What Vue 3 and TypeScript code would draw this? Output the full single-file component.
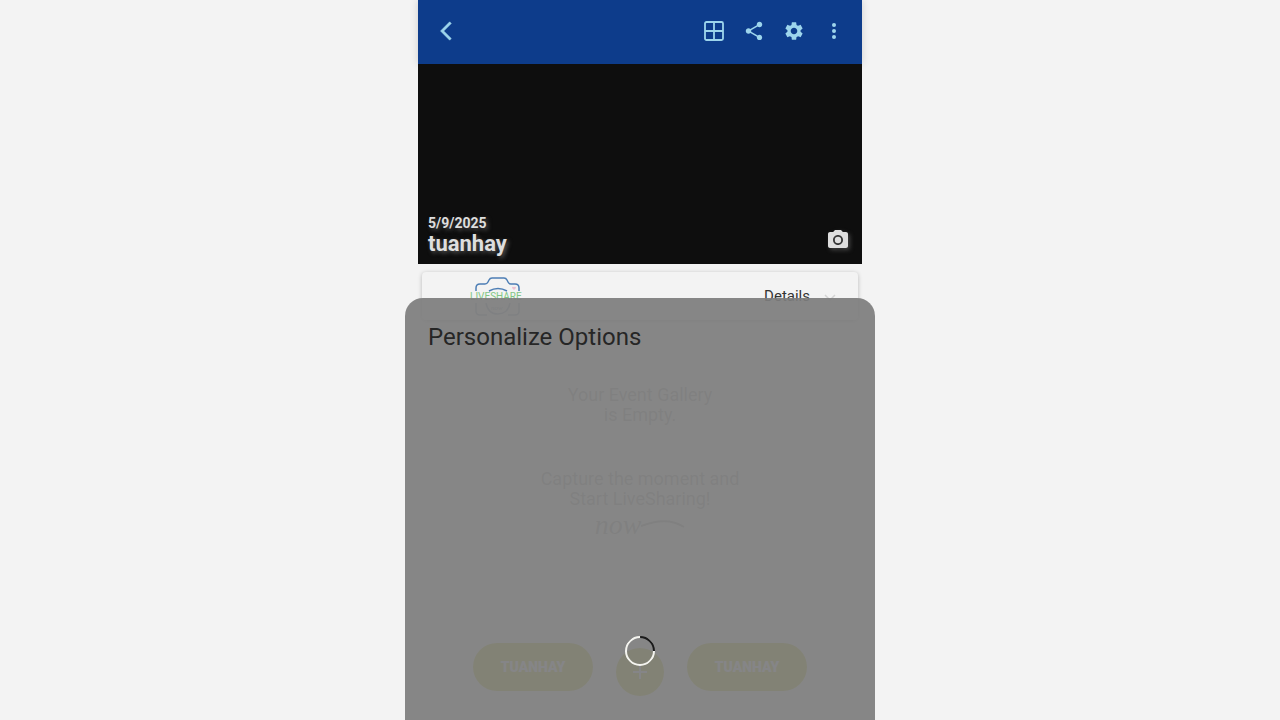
<script setup lang="ts">
const eventName = 'tuanhay'
const eventDate = '5/9/2025'
const gear =
  'M19.14 12.94c.04-.3.06-.61.06-.94 0-.32-.02-.64-.07-.94l2.03-1.58c.18-.14.23-.41.12-.61l-1.92-3.32c-.12-.22-.37-.29-.59-.22l-2.39.96c-.5-.38-1.03-.7-1.62-.94l-.36-2.54c-.04-.24-.24-.41-.48-.41h-3.84c-.24 0-.43.17-.47.41l-.36 2.54c-.59.24-1.13.57-1.62.94l-2.39-.96c-.22-.08-.47 0-.59.22L2.74 8.87c-.12.21-.08.47.12.61l2.03 1.58c-.05.3-.09.63-.09.94s.02.64.07.94l-2.03 1.58c-.18.14-.23.41-.12.61l1.92 3.32c.12.22.37.29.59.22l2.39-.96c.5.38 1.03.7 1.62.94l.36 2.54c.05.24.24.41.48.41h3.84c.24 0 .44-.17.47-.41l.36-2.54c.59-.24 1.13-.56 1.62-.94l2.39.96c.22.08.47 0 .59-.22l1.92-3.32c.12-.22.07-.47-.12-.61l-2.01-1.58zM12 15.6c-1.98 0-3.6-1.62-3.6-3.6s1.62-3.6 3.6-3.6 3.6 1.62 3.6 3.6-1.62 3.6-3.6 3.6z'
const share =
  'M18 16.08c-.76 0-1.44.3-1.96.77L8.91 12.7c.05-.23.09-.46.09-.7s-.04-.47-.09-.7l7.05-4.11c.54.5 1.25.81 2.04.81 1.66 0 3-1.34 3-3s-1.34-3-3-3-3 1.34-3 3c0 .24.04.47.09.7L8.04 9.81C7.5 9.31 6.79 9 6 9c-1.66 0-3 1.34-3 3s1.34 3 3 3c.79 0 1.5-.31 2.04-.81l7.12 4.16c-.05.21-.08.43-.08.65 0 1.61 1.31 2.92 2.92 2.92s2.92-1.31 2.92-2.92-1.31-2.92-2.92-2.92z'
</script>

<template>
  <div class="stage">
    <main class="app">
      <header class="bar">
        <button class="icon back" aria-label="Back">
          <svg width="22" height="22" viewBox="0 0 24 24"><path d="M17.77 3.77 16 2 6 12l10 10 1.77-1.77L9.54 12z" /></svg>
        </button>
        <button class="icon" aria-label="Grid view">
          <svg width="24" height="24" viewBox="0 0 24 24" class="line"><rect x="3" y="3" width="18" height="18" rx="1.5" /><path d="M12 3v18M3 12h18" /></svg>
        </button>
        <button class="icon" aria-label="Share">
          <svg width="22" height="22" viewBox="0 0 24 24"><path :d="share" /></svg>
        </button>
        <button class="icon" aria-label="Settings">
          <svg width="22" height="22" viewBox="0 0 24 24"><path :d="gear" /></svg>
        </button>
        <button class="icon" aria-label="More">
          <svg width="24" height="24" viewBox="0 0 24 24"><circle cx="12" cy="6" r="2" /><circle cx="12" cy="12" r="2" /><circle cx="12" cy="18" r="2" /></svg>
        </button>
      </header>

      <section class="cover">
        <div class="title">
          <span class="date">{{ eventDate }}</span>
          <h1>{{ eventName }}</h1>
        </div>
        <button class="camera" aria-label="Change cover photo">
          <svg width="24" height="24" viewBox="0 0 24 24"><circle cx="12" cy="12" r="3.2" /><path d="M9 2L7.17 4H4c-1.1 0-2 .9-2 2v12c0 1.1.9 2 2 2h16c1.1 0 2-.9 2-2V6c0-1.1-.9-2-2-2h-3.17L15 2H9zm3 15c-2.76 0-5-2.24-5-5s2.24-5 5-5 5 2.24 5 5-2.24 5-5 5z" /></svg>
        </button>
      </section>

      <section class="card">
        <svg class="logo" width="56" height="42" viewBox="0 0 56 42">
          <g fill="none" stroke="#4d7eb5" stroke-width="1.5">
            <path d="M7 15v-3q0-4 4-4h5q2 0 3-2l1-2q1-2 3-2h12q2 0 3 2l1 2q1 2 3 2h4q4 0 4 4v3" />
            <path d="M20 15q9-5 18 0" />
            <path d="M7 27v8q0 4 4 4h7M50 27v8q0 4-4 4h-7M17 27q2 11 12 11t12-11" stroke="#9aaabd" />
          </g>
          <path d="m45 14-2-2q0-2 2-1 2-1 2 1z" fill="#eec1d1" />
          <text x="1" y="24" class="brand">LIVESHARE</text>
          <text x="22" y="34" class="script">now</text>
        </svg>
        <button class="details">
          Details
          <svg width="12" height="8" viewBox="0 0 12 8"><path d="m1 1 5 5 5-5" /></svg>
        </button>
      </section>

      <section class="empty">
        <p>Your Event Gallery<br />is Empty.</p>
        <p>Capture the moment and<br />Start LiveSharing!</p>
        <div class="now">
          <span>now</span>
          <svg width="44" height="12" viewBox="0 0 44 12"><path d="M0 7Q26-3 43 8" /></svg>
        </div>
      </section>

      <footer class="actions">
        <button class="pill">TUANHAY</button>
        <button class="add" aria-label="Add">
          <svg width="14" height="14" viewBox="0 0 14 14"><path d="M7 0v14M0 7h14" /></svg>
        </button>
        <button class="pill">TUANHAY</button>
      </footer>
    </main>

    <section class="sheet" role="dialog" aria-labelledby="sheet-title">
      <h2 id="sheet-title">Personalize Options</h2>
      <div class="spinner" role="status" aria-label="Loading"></div>
    </section>
  </div>
</template>

<style>
html,
body {
  margin: 0;
  background: #f3f3f3;
}
</style>

<style scoped>
.stage {
  position: relative;
  display: flex;
  justify-content: center;
  min-height: 100vh;
  overflow: hidden;
  font-family: Roboto, "Liberation Sans", sans-serif;
}
button {
  padding: 0;
  border: 0;
  background: none;
  font-family: inherit;
}
svg {
  display: block;
}
.app {
  display: flex;
  flex-direction: column;
  width: 100%;
  max-width: 444px;
}
.bar {
  display: flex;
  align-items: center;
  height: 62px;
  padding: 0 8px 2px;
  background: #0d3c8b;
  box-shadow: 0 0 8px rgba(0, 0, 0, 0.15);
}
.icon {
  display: grid;
  place-items: center;
  width: 40px;
  height: 40px;
  fill: #9dd5ec;
}
.back {
  margin-right: auto;
  stroke: #9dd5ec;
  stroke-width: 0.6;
}
.line {
  fill: none;
  stroke: #9dd5ec;
  stroke-width: 1.8;
}
.cover {
  position: relative;
  display: flex;
  align-items: flex-end;
  justify-content: space-between;
  height: 200px;
  box-sizing: border-box;
  padding: 0 12px 8px 10px;
  background: #0e0e0e;
  color: #dedede;
}
.title {
  text-shadow: 2px 2px 4px #555;
}
.date {
  display: block;
  font-size: 14px;
  line-height: 18px;
  font-weight: 700;
}
h1 {
  margin: 0;
  font-size: 22px;
  line-height: 24px;
  font-weight: 700;
}
.camera {
  margin-bottom: 4px;
  fill: #dedede;
  filter: drop-shadow(2px 2px 2px #444);
}
.card {
  display: flex;
  justify-content: space-between;
  height: 48px;
  margin: 8px 4px 0;
  padding: 0 22px 0 47px;
  border-radius: 4px;
  background: #f3f3f3;
  box-shadow: 0 1px 4px rgba(0, 0, 0, 0.25);
}
.logo {
  margin-top: 4px;
}
.brand {
  fill: #82c785;
  font-size: 10px;
}
.script {
  fill: #8c9bb0;
  font-family: "Liberation Serif", serif;
  font-size: 7px;
  font-style: italic;
}
.details {
  display: flex;
  align-items: center;
  gap: 14px;
  color: #333;
  font-size: 15px;
}
.details svg {
  margin-top: 4px;
  fill: none;
  stroke: #d4d4d4;
  stroke-width: 1.5;
}
.empty {
  display: flex;
  flex-direction: column;
  align-items: center;
  padding-top: 65px;
  color: #a4a4a4;
  font-size: 18px;
  line-height: 20px;
  text-align: center;
}
.empty p {
  margin: 0 0 44px;
}
.empty p + p {
  margin-bottom: 4px;
}
.now {
  display: flex;
  align-items: center;
  font-family: "Liberation Serif", serif;
  font-size: 28px;
  line-height: 24px;
  font-style: italic;
}
.now svg {
  fill: none;
  stroke: #a4a4a4;
  stroke-width: 2;
}
.actions {
  display: flex;
  justify-content: center;
  align-items: flex-start;
  gap: 23px;
  margin-top: auto;
  padding-bottom: 24px;
}
.pill,
.add {
  height: 48px;
  border-radius: 24px;
  background: #c0c024;
  color: #e4e4f8;
}
.pill {
  width: 120px;
  font-size: 14px;
  font-weight: 900;
}
.add {
  display: grid;
  place-items: center;
  width: 48px;
  margin-top: 5px;
}
.add svg {
  fill: none;
  stroke: #e4e4f8;
  stroke-width: 2;
}
.sheet {
  position: absolute;
  bottom: 0;
  left: 50%;
  display: flex;
  flex-direction: column;
  align-items: center;
  width: 470px;
  max-width: 100%;
  height: 422px;
  box-sizing: border-box;
  padding: 24px 23px 54px;
  transform: translateX(-50%);
  border-radius: 18px 18px 0 0;
  background: rgba(125, 125, 125, 0.92);
}
h2 {
  align-self: flex-start;
  margin: 0;
  color: #262626;
  font-size: 24px;
  line-height: 30px;
  font-weight: 400;
}
.spinner {
  width: 26px;
  height: 26px;
  margin-top: auto;
  border: 2px solid #f4f4ef;
  border-top-color: #1b1b1b;
  border-radius: 50%;
  transform: rotate(45deg);
}
</style>
